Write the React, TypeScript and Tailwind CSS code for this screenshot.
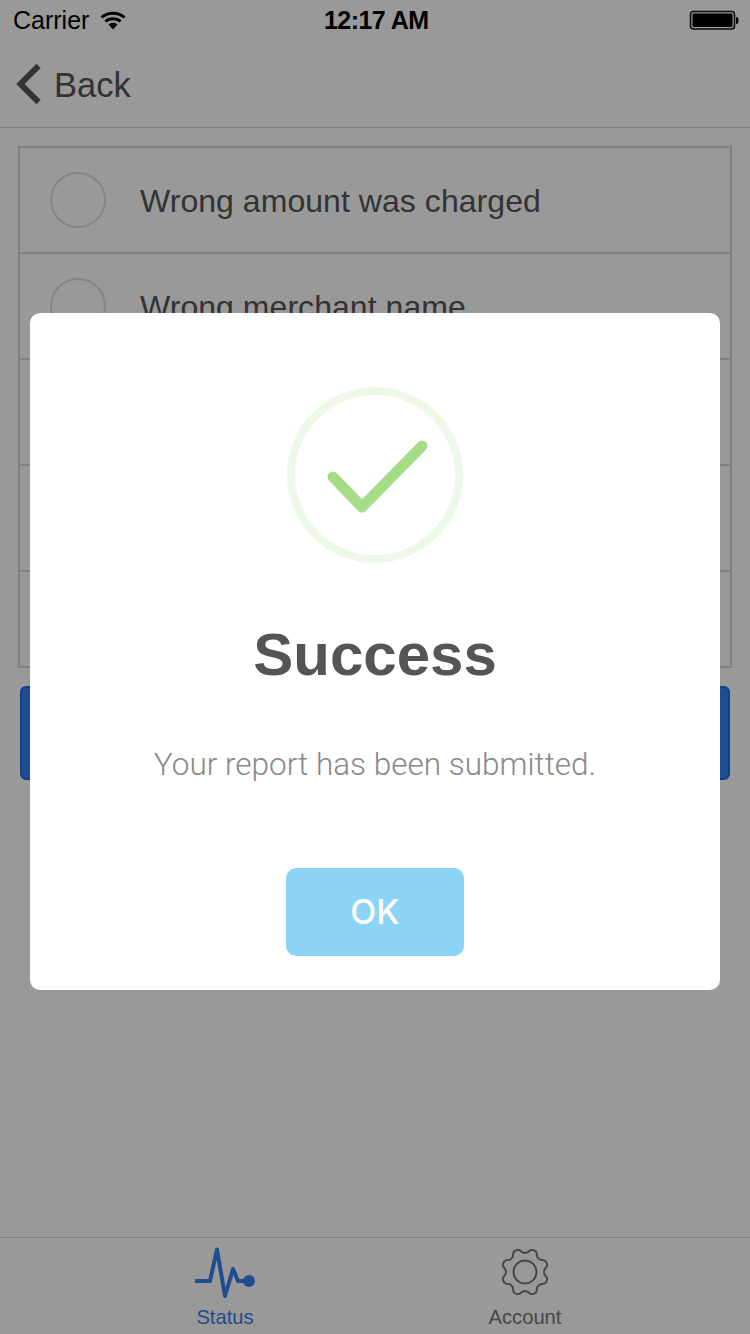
import React from "react";

const SANS = "font-['Liberation_Sans',Arial,sans-serif]";

function gearPath(cx: number, cy: number) {
  const pts: string[] = [];
  const n = 240;
  for (let i = 0; i <= n; i++) {
    const t = (i / n) * Math.PI * 2;
    const c = Math.cos(8 * t);
    const r = 21.3 - 2.5 * Math.tanh(1.3 * c);
    const x = cx + r * Math.sin(t);
    const y = cy - r * Math.cos(t);
    pts.push(`${i === 0 ? "M" : "L"}${x.toFixed(2)} ${y.toFixed(2)}`);
  }
  return pts.join(" ") + "Z";
}

function Row({ label, last }: { label?: string; last?: boolean }) {
  return (
    <div className={`flex items-center pl-[30px] ${last ? "h-[94px]" : "h-[106px] border-b-2 border-[#d6d6d6]"}`}>
      <div className="w-[56px] h-[56px] rounded-full border-2 border-[#dcdcdc] shrink-0" />
      {label && <span className="ml-[34px] pt-[2px] text-[32px] tracking-[0.05px] leading-none text-[#555]">{label}</span>}
    </div>
  );
}

export default function App() {
  return (
    <div className={`relative w-[750px] h-[1334px] overflow-hidden bg-white flex flex-col ${SANS}`}>
      {/* status bar */}
      <div className="h-[40px] flex items-center relative pl-[13px] pr-[11px] text-black">
        <span className="text-[25px] leading-none">Carrier</span>
        <svg className="ml-[11px]" width="26" height="19" viewBox="0 0 26 19" fill="none">
          <path d="M1.500 6.500C7.500 0.800 18.500 0.800 24.500 6.500" stroke="#000" strokeWidth="3" />
          <path d="M5.500 10.500C9.500 6.800 16.500 6.800 20.500 10.500" stroke="#000" strokeWidth="3" />
          <path d="M8.500 13.500C11 11.300 15 11.300 17.500 13.500L13 18.500Z" fill="#000" />
        </svg>
        <span className="flex-1" />
        <svg width="50" height="20" viewBox="0 0 50 20" fill="none">
          <rect x="1.500" y="1.500" width="44" height="17.500" rx="3" stroke="#111" strokeWidth="1.500" />
          <rect x="3.500" y="3.500" width="40" height="13.500" rx="1.500" fill="#000" />
          <path d="M47 7C49 7 49.500 8.500 49.500 10.500C49.500 12.500 49 14 47 14Z" fill="#000" />
        </svg>
        <span className="absolute left-[324px] top-[8px] text-[25px] leading-none font-bold tracking-[-0.55px]">12:17 AM</span>
      </div>

      {/* nav */}
      <div className="h-[88px] flex items-center border-b border-[#d4d4d4] pl-[16px]">
        <svg width="26" height="40" viewBox="0 0 26 40" fill="none">
          <path d="M22.500 2L4.500 20L22.500 38" stroke="#555" strokeWidth="6" />
        </svg>
        <span className="ml-[12px] pt-[4px] text-[34.500px] leading-none text-[#555]">Back</span>
      </div>

      {/* list */}
      <div className="mt-[18px] mx-[18px] border-2 border-[#d6d6d6]">
        <Row label="Wrong amount was charged" />
        <Row label="Wrong merchant name" />
        <Row />
        <Row />
        <Row last />
      </div>

      {/* submit */}
      <div className="mt-[18px] mx-[20px] h-[94px] rounded-[6px] bg-[#3580f0] border-2 border-[#1a6cf5]" />

      <div className="flex-1" />

      {/* tab bar */}
      <div className="h-[97px] border-t border-[#d4d4d4] flex">
        <div className="w-[150px]" />
        <div className="w-[150px] flex flex-col items-center">
          <svg className="mt-[8px] ml-[4px]" width="64" height="52" viewBox="0 0 64 52" fill="none">
            <path d="M1 35H15L22 3.500L30 50L38 23L43 35H52" stroke="#3580f0" strokeWidth="4" strokeLinejoin="round" strokeLinecap="round" />
            <circle cx="54" cy="35" r="6" fill="#3580f0" />
          </svg>
          <span className="text-[20.200px] leading-none mt-[9px] text-[#3580f0]">Status</span>
        </div>
        <div className="w-[150px]" />
        <div className="w-[150px] flex flex-col items-center">
          <svg className="mt-[8px]" width="52" height="52" viewBox="0 0 52 52" fill="none">
            <path d={gearPath(26, 26)} stroke="#777" strokeWidth="2" />
            <circle cx="26" cy="26" r="11.500" stroke="#777" strokeWidth="2" />
          </svg>
          <span className="text-[20.200px] leading-none mt-[9px] text-[#777]">Account</span>
        </div>
      </div>

      {/* dimmer */}
      <div className="absolute inset-0 bg-black/40" />

      {/* dialog */}
      <div className="absolute left-[30px] top-[313px] w-[690px] h-[677px] bg-white rounded-[10px] flex flex-col items-center pt-[74px]">
        <svg width="176" height="176" viewBox="0 0 176 176" fill="none">
          <circle cx="88" cy="88" r="84" stroke="#eef8e8" strokeWidth="8" />
          <path d="M46 90L75 120L135 59" stroke="#a5dc86" strokeWidth="11" strokeLinecap="round" strokeLinejoin="round" />
        </svg>
        <h1 className="mt-[58px] text-[60px] leading-[68px] font-bold text-[#555]">Success</h1>
        <p className="mt-[56px] text-[31.500px] leading-[40px] text-[#888] font-['Roboto',sans-serif] font-light">Your report has been submitted.</p>
        <button className="mt-[83px] w-[178px] h-[88px] rounded-[10px] bg-[#8cd4f5] text-white text-[34px] leading-none font-['Inter',sans-serif] font-medium">OK</button>
      </div>
    </div>
  );
}
